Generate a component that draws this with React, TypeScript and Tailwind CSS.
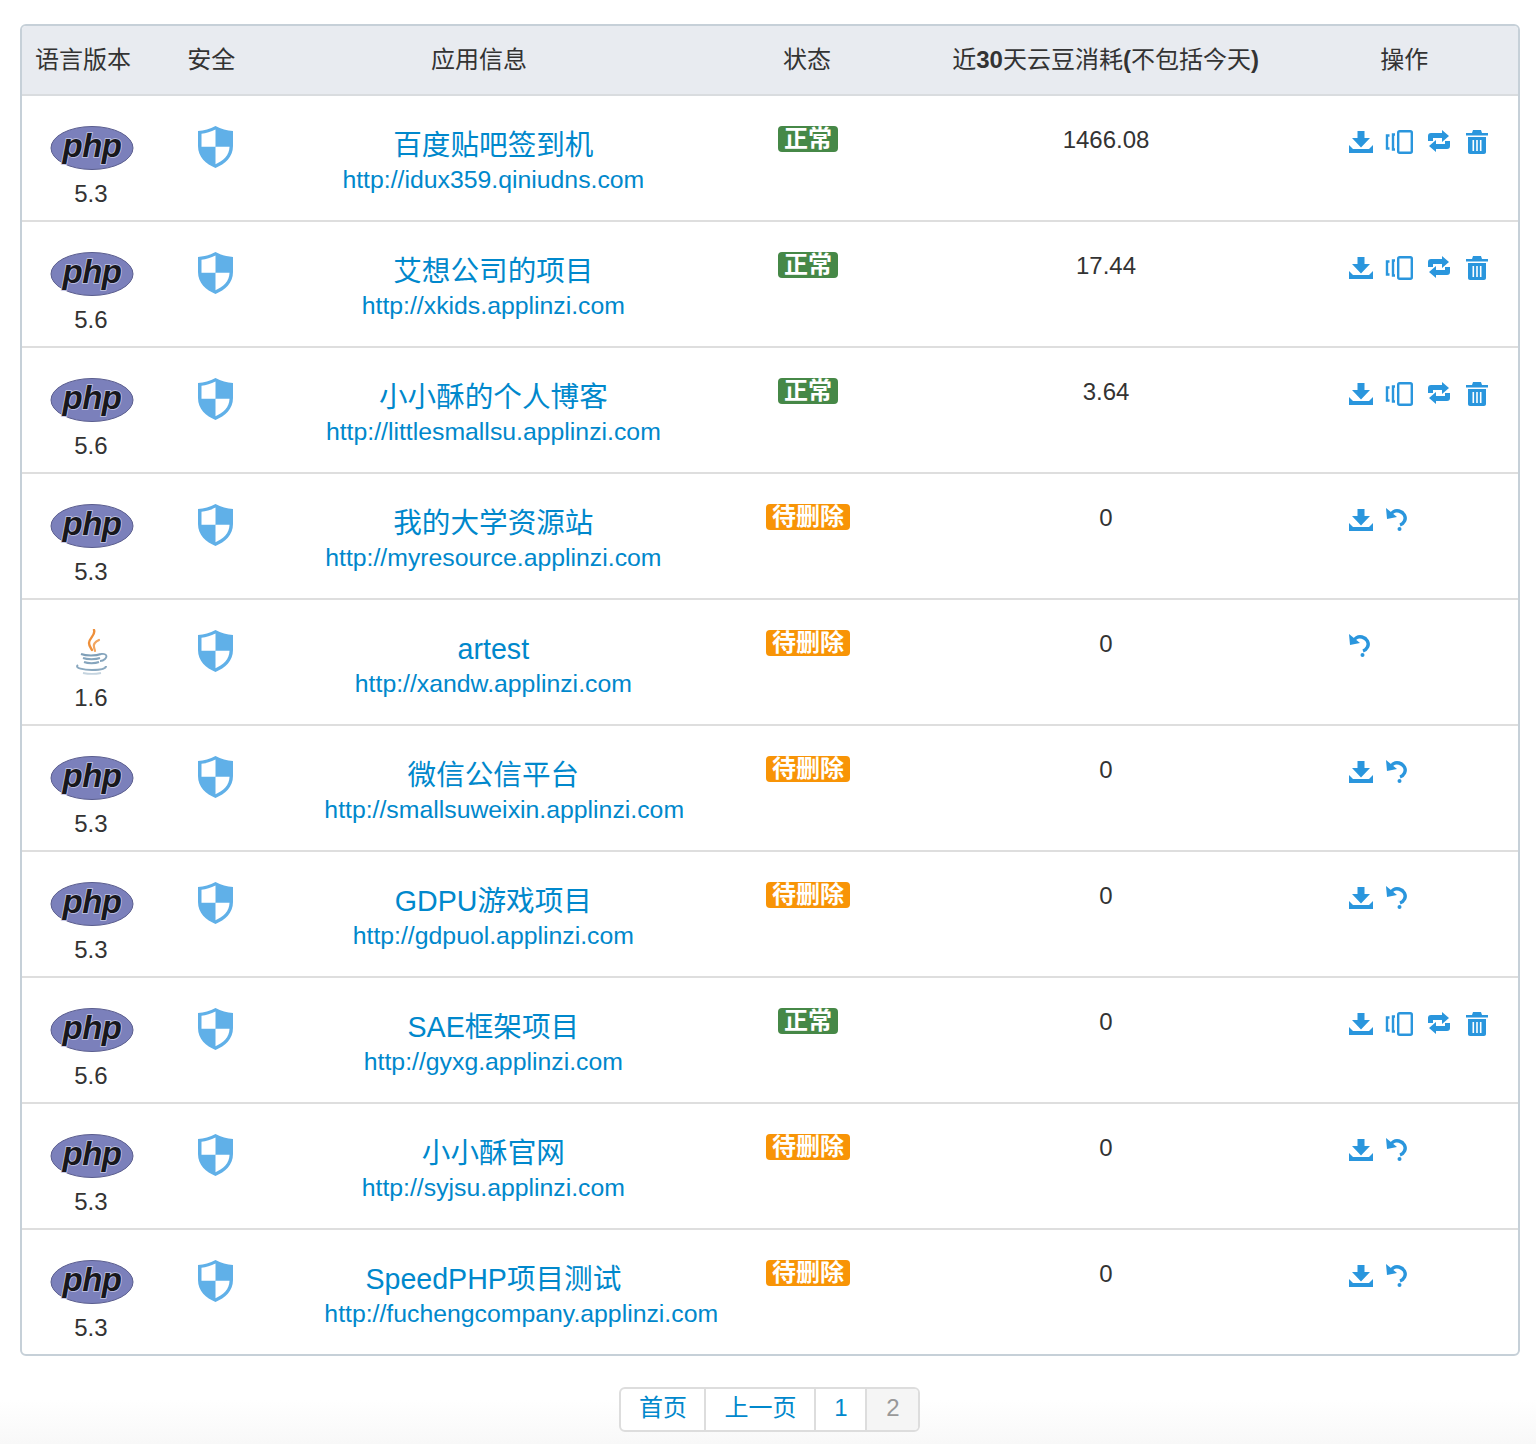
import React from 'react';

const apps = [
  { lang: 'php', ver: '5.3', name: '百度贴吧签到机', url: 'http://idux359.qiniudns.com', ok: true, used: '1466.08' },
  { lang: 'php', ver: '5.6', name: '艾想公司的项目', url: 'http://xkids.applinzi.com', ok: true, used: '17.44' },
  { lang: 'php', ver: '5.6', name: '小小酥的个人博客', url: 'http://littlesmallsu.applinzi.com', ok: true, used: '3.64' },
  { lang: 'php', ver: '5.3', name: '我的大学资源站', url: 'http://myresource.applinzi.com', ok: false, used: '0' },
  { lang: 'java', ver: '1.6', name: 'artest', url: 'http://xandw.applinzi.com', ok: false, used: '0' },
  { lang: 'php', ver: '5.3', name: '微信公信平台', url: 'http://smallsuweixin.applinzi.com', ok: false, used: '0' },
  { lang: 'php', ver: '5.3', name: 'GDPU游戏项目', url: 'http://gdpuol.applinzi.com', ok: false, used: '0' },
  { lang: 'php', ver: '5.6', name: 'SAE框架项目', url: 'http://gyxg.applinzi.com', ok: true, used: '0' },
  { lang: 'php', ver: '5.3', name: '小小酥官网', url: 'http://syjsu.applinzi.com', ok: false, used: '0' },
  { lang: 'php', ver: '5.3', name: 'SpeedPHP项目测试', url: 'http://fuchengcompany.applinzi.com', ok: false, used: '0' },
];

const PhpLogo = () => (
  <svg width="84" height="44" viewBox="0 0 84 44" className="ml-[3px]">
    <ellipse cx="42" cy="22" rx="41" ry="21.5" fill="#7b80bb" stroke="#5a5d8e" strokeWidth="1" />
    <text
      x="42"
      y="31"
      textAnchor="middle"
      fontFamily="'Liberation Sans', sans-serif"
      fontSize="33"
      fontWeight="700"
      fontStyle="italic"
      letterSpacing="-0.5"
      fill="#17171c"
      stroke="#c4c7e4"
      strokeWidth="1.6"
      paintOrder="stroke"
    >
      php
    </text>
  </svg>
);

const JavaLogo = () => (
  <svg width="34" height="46" viewBox="0 0 34 46" fill="none" className="ml-[2px]">
    <path d="M19 1c2 5-5 8-5 13 0 3 2 5 3 7" stroke="#ee8f3a" strokeWidth="2.400" strokeLinecap="round" />
    <path d="M24 11c-4 2-6 4-5 7 0 1 1 3 1 4" stroke="#f2a560" strokeWidth="2.200" strokeLinecap="round" />
    <path d="M6 25c5 2 15 2 20 0" stroke="#7f9fb8" strokeWidth="2" />
    <path d="M8 29c4 1.500 13 1.500 17 0" stroke="#86a5bd" strokeWidth="2" />
    <path d="M9 33c4 1.500 11 1.500 15 0" stroke="#86a5bd" strokeWidth="2" />
    <path d="M26 25c5-1 7 2 4 5-1 1-3 2-5 2" stroke="#86a5bd" strokeWidth="1.800" />
    <path d="M3 36c-4 3 6 5 14 5s14-1 14-4" stroke="#8aa8bf" strokeWidth="2" />
    <path d="M8 44c5 1 13 1 18 0" stroke="#c5d4df" strokeWidth="1.800" />
  </svg>
);

const Shield = () => (
  <svg width="35" height="42" viewBox="0 0 35 42">
    <path d="M17.500 0C23 3 29 4.500 35 5v15c0 11-8 18-17.500 22C8 38 0 31 0 20V5c6-.5 12-2 17.500-5z" fill="#60b0e8" />
    <path d="M17.500 3.600C13 6 8 7.300 3.500 7.800v12.900h14z" fill="#fff" />
    <path d="M17.500 20.700v17.500c7.500-3.400 14-9 14-17.500z" fill="#fff" />
  </svg>
);

const Download = () => (
  <svg width="24" height="22" viewBox="0 0 24 22" fill="#2a96dd">
    <path d="M8.500 0h7v7H21l-9 9.500L3 7h5.500z" />
    <path d="M0 14l4 4h16l4-4v8H0z" />
  </svg>
);

const Rotate = () => (
  <svg width="28" height="24" viewBox="0 0 28 24" fill="none" stroke="#2a96dd" strokeWidth="2.400">
    <rect x="13.200" y="1.200" width="13.600" height="21.600" rx="1.500" />
    <path d="M4.500 5.500H2v13h2.500" />
    <path d="M10 4.500H8v15h2" />
  </svg>
);

const Retweet = () => (
  <svg width="22" height="22" viewBox="0 0 22 22" fill="#2a96dd">
    <path d="M0 11V6c0-2 1-3 3-3h11V0l7 6-7 6V8H5v3z" />
    <path d="M22 11v5c0 2-1 3-3 3H8v3l-7-6 7-6v4h9v-3z" />
  </svg>
);

const Trash = () => (
  <svg width="22" height="24" viewBox="0 0 22 24" fill="#2a96dd">
    <path d="M7 0h8l1 3h6v2.500H0V3h6z" />
    <path d="M2 7h18v15c0 1.200-.8 2-2 2H4c-1.200 0-2-.8-2-2zm4.500 3v11h1.600V10zm3.700 0v11h1.600V10zm3.700 0v11h1.600V10z" fillRule="evenodd" />
  </svg>
);

const Undo = () => (
  <svg width="23" height="24" viewBox="0 0 23 24" fill="none">
    <path d="M4 9c1.500-4 5-6 9-5 5 1.300 7.500 6 5.500 10-1 2-3 3.500-4.500 4" stroke="#2a96dd" strokeWidth="3.400" />
    <path d="M0 1l1 11 10-2z" fill="#2a96dd" />
    <circle cx="13.500" cy="22" r="2" fill="#2a96dd" />
  </svg>
);

export default function App() {
  return (
    <div className="min-h-[1444px] bg-white font-['Liberation_Sans','Noto_Sans_CJK_SC',sans-serif] text-[24px] text-[#333]">
      <div className="px-5 pt-6">
        <div className="w-[1500px] border-2 border-[#c6d0d8] rounded-[6px] overflow-hidden">
          {/* Header */}
          <div className="flex h-[70px] items-center bg-[#e8ebf0] border-b-2 border-[#d9dcdf] text-center">
            <div className="w-[136px] pl-[13px] text-left">语言版本</div>
            <div className="w-[107px]">安全</div>
            <div className="w-[429px]">应用信息</div>
            <div className="w-[228px]">状态</div>
            <div className="w-[370px] whitespace-nowrap">
              近<b>30</b>天云豆消耗<b>(</b>不包括今天<b>)</b>
            </div>
            <div className="w-[228px]">操作</div>
          </div>

          {/* Rows */}
          {apps.map((app, i) => (
            <div key={i} className="flex h-[126px] last:h-[124px] border-b-2 last:border-b-0 border-[#dedede]">
              <div className="w-[138px] pt-[30px] flex flex-col items-center">
                <div className="h-[43px] flex items-center justify-center">
                  {app.lang === 'php' ? <PhpLogo /> : <JavaLogo />}
                </div>
                <div className="leading-[50px]">{app.ver}</div>
              </div>
              <div className="w-[112px] pt-[30px] flex justify-center">
                <div>
                  <Shield />
                </div>
              </div>
              <div className="w-[444px] pt-[30px] flex flex-col items-center text-[#0088cc]">
                <div className="text-[28.6px] leading-[39px] whitespace-nowrap">{app.name}</div>
                <div className="w-[338px] text-center text-[24.8px] whitespace-nowrap leading-[30px]">{app.url}</div>
              </div>
              <div className="w-[186px] pt-[30px] flex justify-center items-start">
                {app.ok ? (
                  <span className="h-[26px] px-[6px] rounded-[4px] bg-[#468847] text-white leading-[26px] font-bold">正常</span>
                ) : (
                  <span className="h-[26px] px-[6px] rounded-[4px] bg-[#f89406] text-white leading-[26px] font-bold">待删除</span>
                )}
              </div>
              <div className="w-[410px] pt-6 pl-px text-center leading-[40px]">{app.used}</div>
              <div className="w-[208px] pl-[39px] pt-[35px] flex items-start">
                {app.ok ? (
                  <>
                    <Download />
                    <div className="ml-[12px] -mt-[1px]"><Rotate /></div>
                    <div className="ml-[15px] -mt-[1px]"><Retweet /></div>
                    <div className="ml-4 -mt-[1px]"><Trash /></div>
                  </>
                ) : app.lang === 'php' ? (
                  <>
                    <Download />
                    <div className="ml-[13px] -mt-[2px]"><Undo /></div>
                  </>
                ) : (
                  <div className="-mt-[2px]"><Undo /></div>
                )}
              </div>
            </div>
          ))}
        </div>
      </div>

      {/* Pagination */}
      <div className="h-[88px] pt-[31px] pl-[2px] flex justify-center bg-gradient-to-b from-white from-50% to-[#f8f8f8]">
        <div className="flex h-[45px] w-[301px] border-2 border-[#dddddd] rounded-[6px] overflow-hidden text-[#0088cc] leading-[37px] text-center bg-white">
          <div className="w-[85px] pl-[2px] border-r-2 border-[#dddddd]">首页</div>
          <div className="w-[110px] pl-[2px] border-r-2 border-[#dddddd]">上一页</div>
          <div className="w-[51px] pl-[2px] border-r-2 border-[#dddddd]">1</div>
          <div className="flex-1 pl-[2px] bg-[#f5f5f5] text-[#999]">2</div>
        </div>
      </div>
    </div>
  );
}
